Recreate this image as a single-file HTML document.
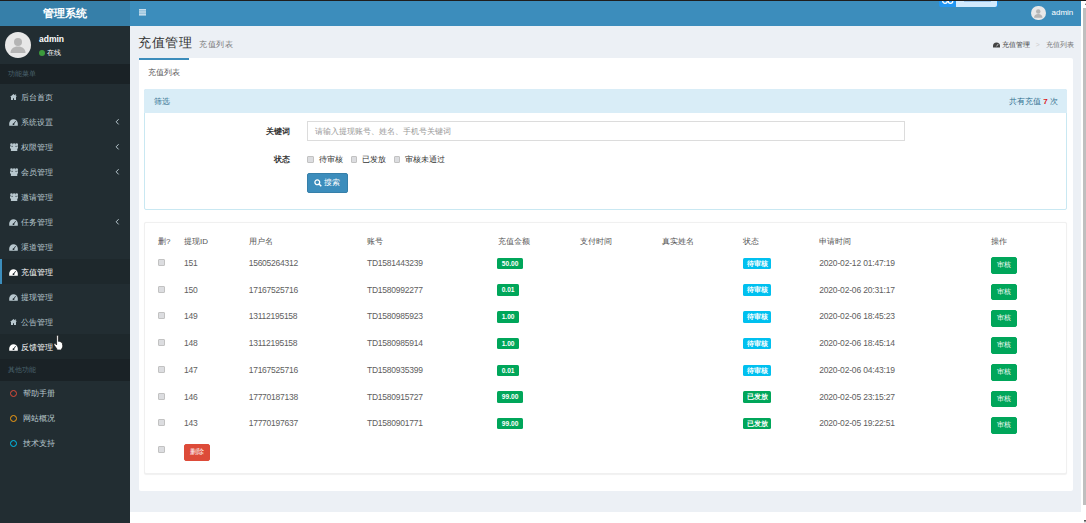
<!DOCTYPE html>
<html><head><meta charset="utf-8">
<style>
*{box-sizing:border-box;margin:0;padding:0}
body *{white-space:nowrap}
html,body{width:1086px;height:523px;overflow:hidden;background:#fff;font-family:"Liberation Sans",sans-serif;color:#333}
.abs{position:absolute}
#topstrip{left:0;top:0;width:1086px;height:1px;background:#1f1d1c}
#logo{left:0;top:1px;width:130px;height:25px;background:#367fa9;color:#fff;font-weight:bold;font-size:11.2px;line-height:25px;text-align:center}
#navbar{left:130px;top:1px;width:951px;height:25px;background:#3c8dbc}
#sidebar{left:0;top:26px;width:130px;height:497px;background:#222d32}
#content{left:130px;top:26px;width:951.5px;height:486.3px;background:#ecf0f5}
#footer{left:130px;top:512.3px;width:951px;height:11px;background:#fff}
#sbar{left:1081px;top:1px;width:5px;height:522px;background:#fff}
#thumb{left:1083px;top:8.3px;width:3px;height:496.7px;background:#bfbfbf}
#arrow{left:1084px;top:520px;width:0;height:0;border-left:1.5px solid transparent;border-right:1.5px solid transparent;border-top:3px solid #333}
.menu{position:absolute;left:0;width:130px;height:25px;color:#b8c7ce;font-size:8px;line-height:25px}
.menu .t{position:absolute;left:21px;top:1px}
.menu .ic{position:absolute;left:9px;top:9px;width:9px;height:7px}
.menu .chev{position:absolute;left:116px;top:0;font-size:8px}
.mhead{position:absolute;left:0;width:130px;height:20px;background:#1a2226;color:#4b646f;font-size:7px;line-height:20px;padding-left:8px}
.circ{position:absolute;left:9.7px;top:9px;width:7.4px;height:7.4px;border-radius:50%;border:1.8px solid}
.cb{width:6.6px;height:7px;border:1px solid #c2c2c2;border-radius:1px;background:#dcdde0}
.td{color:#555;font-size:8px;line-height:10px;margin-top:1px}
.num{color:#606060;font-size:8.5px;letter-spacing:-0.25px;margin-top:0.6px}
.badge{height:11.5px;border-radius:1.5px;color:#fff;font-weight:bold;font-size:6.6px;line-height:11.5px;text-align:center}
.btn{border:1px solid;border-radius:2px;color:#fff;font-size:6.6px;line-height:14.8px;text-align:center}
</style></head><body>
<div id="topstrip" class="abs"></div>
<div id="logo" class="abs">管理系统</div>
<div id="navbar" class="abs"></div>
<div id="sidebar" class="abs"></div>
<div id="side" class="abs" style="left:0;top:0">
<div class="abs" style="left:5px;top:32px;width:26px;height:26px;border-radius:50%;background:#e8e8e8;overflow:hidden"><svg width="26" height="26" viewBox="0 0 26 26"><circle cx="13" cy="10" r="4" fill="#b5b5b5"/><path d="M5.5 21c0-4 3-6.5 7.5-6.5s7.5 2.5 7.5 6.5z" fill="#b5b5b5"/></svg></div>
<div class="abs" style="left:39px;top:34px;color:#fff;font-weight:bold;font-size:8.5px;line-height:11px">admin</div>
<div class="abs" style="left:39px;top:50px;width:6px;height:6px;border-radius:50%;background:#3c9a3c"></div>
<div class="abs" style="left:46.5px;top:48px;color:#fff;font-size:6.8px;line-height:9px">在线</div>
<div class="mhead" style="top:64px">功能菜单</div>
<div class="menu" style="top:84px;color:#b8c7ce"><svg style="position:absolute;left:9.5px;top:9.8px" viewBox="0 0 7 6" width="7" height="6"><path d="M3.5 0L0 3h1v3h2V4.3h1V6h2V3h1z" fill="#b8c7ce"/><rect x="5.2" y="0.4" width="0.9" height="2" fill="#b8c7ce"/></svg><span class="t">后台首页</span></div>
<div class="menu" style="top:109px;color:#b8c7ce"><svg style="position:absolute;left:9.2px;top:10px" viewBox="0 0 9 7" width="9" height="7"><path d="M4.5 0.2A4.3 4.3 0 0 0 0.2 4.5V6.8h8.6V4.5A4.3 4.3 0 0 0 4.5 0.2z" fill="#b8c7ce"/><path d="M4.5 5.2L6.6 2.2" stroke="#222d32" stroke-width="0.9"/><circle cx="4.5" cy="5.2" r="0.9" fill="#222d32"/></svg><span class="t">系统设置</span><svg class="chev" width="5" height="8" viewBox="0 0 5 8" style="position:absolute;left:115px;top:9px"><path d="M3.6 1.2L1.2 3.8l2.4 2.6" stroke="#b8c7ce" stroke-width="1" fill="none"/></svg></div>
<div class="menu" style="top:134px;color:#b8c7ce"><svg style="position:absolute;left:9.6px;top:9px" viewBox="0 0 9 8" width="8.2" height="8" preserveAspectRatio="none"><circle cx="4.5" cy="2.2" r="2" fill="#b8c7ce"/><circle cx="1.6" cy="1.7" r="1.4" fill="#b8c7ce"/><circle cx="7.4" cy="1.7" r="1.4" fill="#b8c7ce"/><path d="M1 8V5.2Q1 3.8 2.5 3.8h4Q8 3.8 8 5.2V8z" fill="#b8c7ce"/><path d="M0 5.5V3.2h2V5.5zM7 5.5V3.2h2V5.5z" fill="#b8c7ce"/></svg><span class="t">权限管理</span><svg class="chev" width="5" height="8" viewBox="0 0 5 8" style="position:absolute;left:115px;top:9px"><path d="M3.6 1.2L1.2 3.8l2.4 2.6" stroke="#b8c7ce" stroke-width="1" fill="none"/></svg></div>
<div class="menu" style="top:159px;color:#b8c7ce"><svg style="position:absolute;left:9.6px;top:9px" viewBox="0 0 9 8" width="8.2" height="8" preserveAspectRatio="none"><circle cx="4.5" cy="2.2" r="2" fill="#b8c7ce"/><circle cx="1.6" cy="1.7" r="1.4" fill="#b8c7ce"/><circle cx="7.4" cy="1.7" r="1.4" fill="#b8c7ce"/><path d="M1 8V5.2Q1 3.8 2.5 3.8h4Q8 3.8 8 5.2V8z" fill="#b8c7ce"/><path d="M0 5.5V3.2h2V5.5zM7 5.5V3.2h2V5.5z" fill="#b8c7ce"/></svg><span class="t">会员管理</span><svg class="chev" width="5" height="8" viewBox="0 0 5 8" style="position:absolute;left:115px;top:9px"><path d="M3.6 1.2L1.2 3.8l2.4 2.6" stroke="#b8c7ce" stroke-width="1" fill="none"/></svg></div>
<div class="menu" style="top:184px;color:#b8c7ce"><svg style="position:absolute;left:9.6px;top:9px" viewBox="0 0 9 8" width="8.2" height="8" preserveAspectRatio="none"><circle cx="4.5" cy="2.2" r="2" fill="#b8c7ce"/><circle cx="1.6" cy="1.7" r="1.4" fill="#b8c7ce"/><circle cx="7.4" cy="1.7" r="1.4" fill="#b8c7ce"/><path d="M1 8V5.2Q1 3.8 2.5 3.8h4Q8 3.8 8 5.2V8z" fill="#b8c7ce"/><path d="M0 5.5V3.2h2V5.5zM7 5.5V3.2h2V5.5z" fill="#b8c7ce"/></svg><span class="t">邀请管理</span></div>
<div class="menu" style="top:209px;color:#b8c7ce"><svg style="position:absolute;left:9.2px;top:10px" viewBox="0 0 9 7" width="9" height="7"><path d="M4.5 0.2A4.3 4.3 0 0 0 0.2 4.5V6.8h8.6V4.5A4.3 4.3 0 0 0 4.5 0.2z" fill="#b8c7ce"/><path d="M4.5 5.2L6.6 2.2" stroke="#222d32" stroke-width="0.9"/><circle cx="4.5" cy="5.2" r="0.9" fill="#222d32"/></svg><span class="t">任务管理</span><svg class="chev" width="5" height="8" viewBox="0 0 5 8" style="position:absolute;left:115px;top:9px"><path d="M3.6 1.2L1.2 3.8l2.4 2.6" stroke="#b8c7ce" stroke-width="1" fill="none"/></svg></div>
<div class="menu" style="top:234px;color:#b8c7ce"><svg style="position:absolute;left:9.2px;top:10px" viewBox="0 0 9 7" width="9" height="7"><path d="M4.5 0.2A4.3 4.3 0 0 0 0.2 4.5V6.8h8.6V4.5A4.3 4.3 0 0 0 4.5 0.2z" fill="#b8c7ce"/><path d="M4.5 5.2L6.6 2.2" stroke="#222d32" stroke-width="0.9"/><circle cx="4.5" cy="5.2" r="0.9" fill="#222d32"/></svg><span class="t">渠道管理</span></div>
<div class="menu" style="top:259px;background:#1e282c;color:#fff"><svg style="position:absolute;left:9.2px;top:10px" viewBox="0 0 9 7" width="9" height="7"><path d="M4.5 0.2A4.3 4.3 0 0 0 0.2 4.5V6.8h8.6V4.5A4.3 4.3 0 0 0 4.5 0.2z" fill="#fff"/><path d="M4.5 5.2L6.6 2.2" stroke="#1e282c" stroke-width="0.9"/><circle cx="4.5" cy="5.2" r="0.9" fill="#1e282c"/></svg><span class="t">充值管理</span></div>
<div class="menu" style="top:284px;color:#b8c7ce"><svg style="position:absolute;left:9.2px;top:10px" viewBox="0 0 9 7" width="9" height="7"><path d="M4.5 0.2A4.3 4.3 0 0 0 0.2 4.5V6.8h8.6V4.5A4.3 4.3 0 0 0 4.5 0.2z" fill="#b8c7ce"/><path d="M4.5 5.2L6.6 2.2" stroke="#222d32" stroke-width="0.9"/><circle cx="4.5" cy="5.2" r="0.9" fill="#222d32"/></svg><span class="t">提现管理</span></div>
<div class="menu" style="top:309px;color:#b8c7ce"><svg style="position:absolute;left:9.5px;top:9.8px" viewBox="0 0 7 6" width="7" height="6"><path d="M3.5 0L0 3h1v3h2V4.3h1V6h2V3h1z" fill="#b8c7ce"/><rect x="5.2" y="0.4" width="0.9" height="2" fill="#b8c7ce"/></svg><span class="t">公告管理</span></div>
<div class="menu" style="top:334px;background:#1e282c;color:#fff"><svg style="position:absolute;left:9.2px;top:10px" viewBox="0 0 9 7" width="9" height="7"><path d="M4.5 0.2A4.3 4.3 0 0 0 0.2 4.5V6.8h8.6V4.5A4.3 4.3 0 0 0 4.5 0.2z" fill="#fff"/><path d="M4.5 5.2L6.6 2.2" stroke="#1e282c" stroke-width="0.9"/><circle cx="4.5" cy="5.2" r="0.9" fill="#1e282c"/></svg><span class="t">反馈管理</span></div>
<div class="abs" style="left:0;top:259px;width:2px;height:25px;background:#3c8dbc"></div>
<div class="mhead" style="top:359px;height:22px;line-height:22px">其他功能</div>
<div class="menu" style="top:381px"><span class="circ" style="border-color:#dd4b39"></span><span class="t" style="left:23px;top:0.3px">帮助手册</span></div>
<div class="menu" style="top:406px"><span class="circ" style="border-color:#f39c12"></span><span class="t" style="left:23px;top:0.3px">网站概况</span></div>
<div class="menu" style="top:431px"><span class="circ" style="border-color:#00c0ef"></span><span class="t" style="left:23px;top:0.3px">技术支持</span></div>
</div>
<div id="content" class="abs"></div>
<div id="footer" class="abs"></div>
<div id="sbar" class="abs"></div>
<div id="thumb" class="abs"></div>
<div id="arrow" class="abs"></div>
<div class="abs" style="left:1084.5px;top:2.8px;width:0;height:0;border-left:1.5px solid transparent;border-right:1.5px solid transparent;border-bottom:2.6px solid #555"></div>

<div id="main" class="abs" style="left:0;top:0">
<!-- hamburger -->
<svg class="abs" style="left:139px;top:9px" width="7" height="7" viewBox="0 0 7 7"><rect x="0" y="0" width="7" height="6.6" fill="#c4dcec"/><rect x="0" y="1.6" width="7" height="0.6" fill="#3c8dbc" opacity="0.7"/><rect x="0" y="3.8" width="7" height="0.6" fill="#3c8dbc" opacity="0.7"/></svg>
<!-- float widget -->
<div class="abs" style="left:939px;top:0;width:59px;height:7px;border-radius:0 0 2px 2px;background:#2196f3;overflow:hidden"><div class="abs" style="left:17px;top:0;width:41px;height:6.5px;background:#d2eafd;border-radius:0 0 2px 0"></div>
<svg class="abs" style="left:3px;top:-2px" width="12" height="7" viewBox="0 0 12 7"><circle cx="3" cy="3" r="2.3" stroke="#fff" stroke-width="1.3" fill="none"/><circle cx="8.5" cy="3" r="2.3" stroke="#fff" stroke-width="1.3" fill="none"/></svg>
<div class="abs" style="left:25px;top:0;width:27px;height:2.4px;background:#9cc6ee"></div></div>
<div class="abs" style="left:0;top:0;width:1086px;height:1px;background:#1f1d1c"></div>
<!-- header user -->
<div class="abs" style="left:1031px;top:5.5px;width:14.5px;height:14.5px;border-radius:50%;background:#e8e8e8;overflow:hidden"><svg width="14.5" height="14.5" viewBox="0 0 26 26"><circle cx="13" cy="10" r="4" fill="#b5b5b5"/><path d="M5.5 21c0-4 3-6.5 7.5-6.5s7.5 2.5 7.5 6.5z" fill="#b5b5b5"/></svg></div>
<div class="abs" style="left:1051.5px;top:7px;color:#fff;font-size:8px;line-height:11px">admin</div>
<!-- title -->
<div class="abs" style="left:138.3px;top:34px;color:#333;font-size:13px;letter-spacing:0.5px;line-height:18px">充值管理</div><div class="abs" style="left:199.3px;top:39.2px;color:#777;font-size:8px;letter-spacing:0.55px;line-height:11px">充值列表</div>
<!-- breadcrumb -->
<div class="abs" style="left:993px;top:40px;color:#444;font-size:6.8px;line-height:9px">
<svg width="7" height="6" viewBox="0 0 10 7" style="vertical-align:-0.5px"><path d="M5 0A5 5 0 0 0 0 5v2h10V5A5 5 0 0 0 5 0z" fill="#444"/><path d="M5 5.5L7.5 2" stroke="#ecf0f5" stroke-width="1"/></svg> 充值管理 <span style="color:#ccc;margin:0 4px">&gt;</span> <span style="color:#777">充值列表</span></div>
<!-- tab box -->
<div class="abs" style="left:139px;top:58px;width:934px;height:433px;background:#fff;border-radius:2px"></div>
<div class="abs" style="left:139px;top:58px;width:50px;height:2px;background:#3c8dbc"></div>
<div class="abs" style="left:147.5px;top:67.7px;color:#555;font-size:8px;line-height:10px">充值列表</div>
<!-- filter panel -->
<div class="abs" style="left:144px;top:89px;width:923px;height:120.5px;border:1px solid #c9e8f2;border-radius:2px;background:#fff"></div>
<div class="abs" style="left:144px;top:89px;width:923px;height:24.3px;background:#d9edf7;border-radius:2px 2px 0 0"></div>
<div class="abs" style="left:153.5px;top:96.7px;color:#31708f;font-size:8px;line-height:10px">筛选</div>
<div class="abs" style="left:1009px;top:96.7px;color:#31708f;font-size:8px;line-height:10px">共有充值 <b style="color:#dd1b1b">7</b> 次</div>
<div class="abs" style="left:265.5px;top:127.2px;color:#333;font-size:8px;line-height:10px;font-weight:bold">关键词</div>
<div class="abs" style="left:307px;top:121.2px;width:598px;height:19.5px;border:1px solid #dcdcdc;background:#fff"></div>
<div class="abs" style="left:314.5px;top:127px;color:#999;font-size:7.9px;line-height:10px">请输入提现账号、姓名、手机号关键词</div>
<div class="abs" style="left:273.5px;top:154.5px;color:#333;font-size:8px;line-height:10px;font-weight:bold">状态</div>
<div class="abs cb" style="left:307.4px;top:156.3px"></div><div class="abs" style="left:318.7px;top:154.5px;color:#333;font-size:8px;line-height:10px">待审核</div>
<div class="abs cb" style="left:350.6px;top:156.3px"></div><div class="abs" style="left:361.8px;top:154.5px;color:#333;font-size:8px;line-height:10px">已发放</div>
<div class="abs cb" style="left:393.7px;top:156.3px"></div><div class="abs" style="left:404.7px;top:154.5px;color:#333;font-size:8px;line-height:10px">审核未通过</div>

<div class="abs" style="left:307px;top:173px;width:40.5px;height:19.5px;background:#3c8dbc;border:1px solid #367fa9;border-radius:2px"></div>
<svg class="abs" style="left:314px;top:179px" width="8" height="8" viewBox="0 0 8 8"><circle cx="3.3" cy="3.3" r="2.4" stroke="#fff" stroke-width="1.3" fill="none"/><path d="M5 5L7.3 7.3" stroke="#fff" stroke-width="1.5"/></svg>
<div class="abs" style="left:323.5px;top:178px;color:#fff;font-size:8px;line-height:10px">搜索</div>
<!-- table box -->
<div class="abs" style="left:144px;top:222px;width:923px;height:252px;background:#fff;border:1px solid #f0f0f0;border-radius:2px;box-shadow:0 0.5px 1px rgba(0,0,0,0.06)"></div>
<div class="abs td" style="left:158px;top:236.3px">删?</div>
<div class="abs td" style="left:184px;top:236.3px">提现ID</div>
<div class="abs td" style="left:248.7px;top:236.3px">用户名</div>
<div class="abs td" style="left:367px;top:236.3px">账号</div>
<div class="abs td" style="left:497.6px;top:236.3px">充值金额</div>
<div class="abs td" style="left:579.6px;top:236.3px">支付时间</div>
<div class="abs td" style="left:661.5px;top:236.3px">真实姓名</div>
<div class="abs td" style="left:743.2px;top:236.40px">状态</div>
<div class="abs td" style="left:819.2px;top:236.3px">申请时间</div>
<div class="abs td" style="left:990.8px;top:236.3px">操作</div>
<div class="abs cb" style="left:158.3px;top:259.00px"></div>
<div class="abs td num" style="left:184px;top:257.30px">151</div>
<div class="abs td num" style="left:248.7px;top:257.30px">15605264312</div>
<div class="abs td num" style="left:367px;top:257.30px">TD1581443239</div>
<div class="abs badge" style="left:497.3px;top:257.60px;width:25.6px;background:#00a65a">50.00</div>
<div class="abs badge" style="left:743.2px;top:257.60px;width:28px;background:#00c0ef">待审核</div>
<div class="abs td num" style="left:819.2px;top:257.30px;letter-spacing:-0.17px">2020-02-12 01:47:19</div>
<div class="abs btn" style="left:991px;top:256.90px;width:26px;height:16.8px;background:#00a65a;border-color:#00a65a">审核</div>
<div class="abs cb" style="left:158.3px;top:285.73px"></div>
<div class="abs td num" style="left:184px;top:284.03px">150</div>
<div class="abs td num" style="left:248.7px;top:284.03px">17167525716</div>
<div class="abs td num" style="left:367px;top:284.03px">TD1580992277</div>
<div class="abs badge" style="left:497.3px;top:284.33px;width:21.6px;background:#00a65a">0.01</div>
<div class="abs badge" style="left:743.2px;top:284.33px;width:28px;background:#00c0ef">待审核</div>
<div class="abs td num" style="left:819.2px;top:284.03px;letter-spacing:-0.17px">2020-02-06 20:31:17</div>
<div class="abs btn" style="left:991px;top:283.63px;width:26px;height:16.8px;background:#00a65a;border-color:#00a65a">审核</div>
<div class="abs cb" style="left:158.3px;top:312.46px"></div>
<div class="abs td num" style="left:184px;top:310.76px">149</div>
<div class="abs td num" style="left:248.7px;top:310.76px">13112195158</div>
<div class="abs td num" style="left:367px;top:310.76px">TD1580985923</div>
<div class="abs badge" style="left:497.3px;top:311.06px;width:21.6px;background:#00a65a">1.00</div>
<div class="abs badge" style="left:743.2px;top:311.06px;width:28px;background:#00c0ef">待审核</div>
<div class="abs td num" style="left:819.2px;top:310.76px;letter-spacing:-0.17px">2020-02-06 18:45:23</div>
<div class="abs btn" style="left:991px;top:310.36px;width:26px;height:16.8px;background:#00a65a;border-color:#00a65a">审核</div>
<div class="abs cb" style="left:158.3px;top:339.19px"></div>
<div class="abs td num" style="left:184px;top:337.49px">148</div>
<div class="abs td num" style="left:248.7px;top:337.49px">13112195158</div>
<div class="abs td num" style="left:367px;top:337.49px">TD1580985914</div>
<div class="abs badge" style="left:497.3px;top:337.79px;width:21.6px;background:#00a65a">1.00</div>
<div class="abs badge" style="left:743.2px;top:337.79px;width:28px;background:#00c0ef">待审核</div>
<div class="abs td num" style="left:819.2px;top:337.49px;letter-spacing:-0.17px">2020-02-06 18:45:14</div>
<div class="abs btn" style="left:991px;top:337.09px;width:26px;height:16.8px;background:#00a65a;border-color:#00a65a">审核</div>
<div class="abs cb" style="left:158.3px;top:365.92px"></div>
<div class="abs td num" style="left:184px;top:364.22px">147</div>
<div class="abs td num" style="left:248.7px;top:364.22px">17167525716</div>
<div class="abs td num" style="left:367px;top:364.22px">TD1580935399</div>
<div class="abs badge" style="left:497.3px;top:364.52px;width:21.6px;background:#00a65a">0.01</div>
<div class="abs badge" style="left:743.2px;top:364.52px;width:28px;background:#00c0ef">待审核</div>
<div class="abs td num" style="left:819.2px;top:364.22px;letter-spacing:-0.17px">2020-02-06 04:43:19</div>
<div class="abs btn" style="left:991px;top:363.82px;width:26px;height:16.8px;background:#00a65a;border-color:#00a65a">审核</div>
<div class="abs cb" style="left:158.3px;top:392.65px"></div>
<div class="abs td num" style="left:184px;top:390.95px">146</div>
<div class="abs td num" style="left:248.7px;top:390.95px">17770187138</div>
<div class="abs td num" style="left:367px;top:390.95px">TD1580915727</div>
<div class="abs badge" style="left:497.3px;top:391.25px;width:25.6px;background:#00a65a">99.00</div>
<div class="abs badge" style="left:743.2px;top:391.25px;width:28px;background:#00a65a">已发放</div>
<div class="abs td num" style="left:819.2px;top:390.95px;letter-spacing:-0.17px">2020-02-05 23:15:27</div>
<div class="abs btn" style="left:991px;top:390.55px;width:26px;height:16.8px;background:#00a65a;border-color:#00a65a">审核</div>
<div class="abs cb" style="left:158.3px;top:419.38px"></div>
<div class="abs td num" style="left:184px;top:417.68px">143</div>
<div class="abs td num" style="left:248.7px;top:417.68px">17770197637</div>
<div class="abs td num" style="left:367px;top:417.68px">TD1580901771</div>
<div class="abs badge" style="left:497.3px;top:417.98px;width:25.6px;background:#00a65a">99.00</div>
<div class="abs badge" style="left:743.2px;top:417.98px;width:28px;background:#00a65a">已发放</div>
<div class="abs td num" style="left:819.2px;top:417.68px;letter-spacing:-0.17px">2020-02-05 19:22:51</div>
<div class="abs btn" style="left:991px;top:417.28px;width:26px;height:16.8px;background:#00a65a;border-color:#00a65a">审核</div>
<div class="abs cb" style="left:158.3px;top:446.11px"></div>
<div class="abs btn" style="left:183.7px;top:444px;width:26.5px;height:16.6px;background:#dd4b39;border-color:#dd4b39">删除</div>
</div>
<svg class="abs" style="left:53px;top:335px" width="12" height="15" viewBox="0 0 12 15"><path d="M3.6 1.2c0-.6.4-1 .9-1s.9.4.9 1v5.2l.3-.1c.5-.2 1 0 1.2.4l.1.1c.5-.2 1 0 1.2.5c.5-.1 1 .2 1.1.7l.4 2.6c.1 1.3-.3 2.5-1.2 3.4V15H3.8v-1.2L1.2 10.2c-.4-.5-.3-1.1.1-1.4c.4-.3 1-.3 1.4.1l.9 1z" fill="#fff" stroke="#111" stroke-width="0.7"/></svg>
</body></html>
